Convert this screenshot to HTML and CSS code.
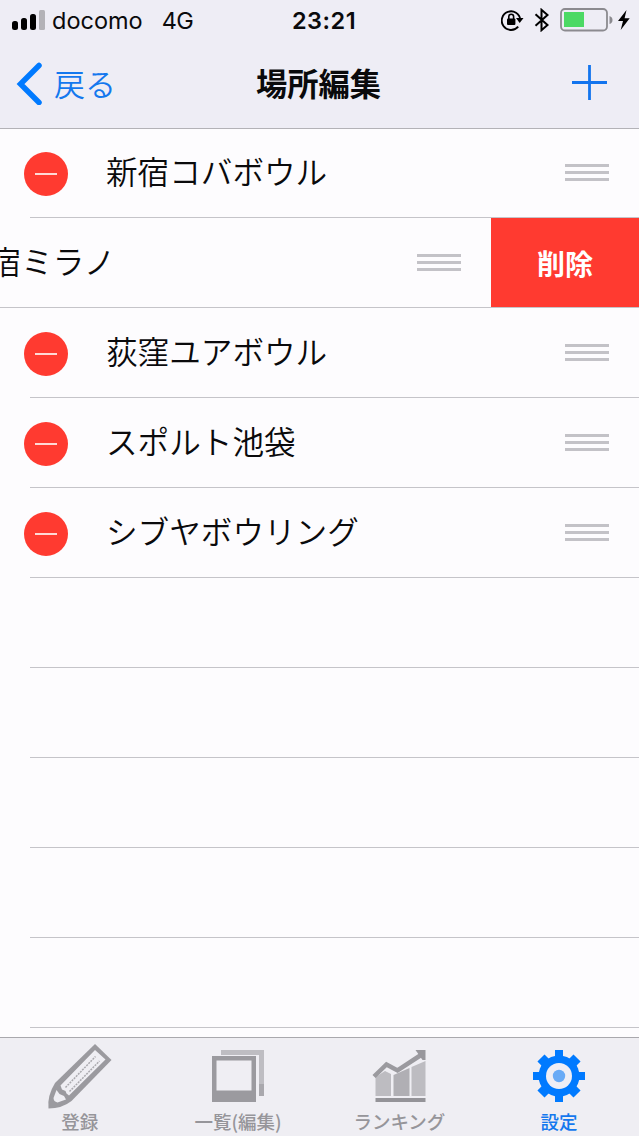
FILE: index.html
```html
<!DOCTYPE html>
<html lang="ja">
<head>
  <meta charset="UTF-8">
  <title>場所編集</title>
  <link rel="stylesheet" href="styles.css">
</head>
<body>
  <header class="header">
    <div class="status">
      <div class="status-left">
        <svg class="signal" width="34" height="21" viewBox="0 0 34 21">
          <rect x="0" y="11" width="6" height="9" rx="2.5"/>
          <rect x="9" y="8" width="6" height="12" rx="2.5"/>
          <rect x="18" y="4" width="6" height="16" rx="2.5"/>
          <rect x="27" y="0" width="6" height="20" rx="1.5" fill="#b3b2b7"/>
        </svg>
        <span class="carrier">docomo</span>
        <span class="network">4G</span>
      </div>
      <div class="clock">23:21</div>
      <div class="status-right">
        <svg width="23" height="22" viewBox="0 0 23 22">
          <path d="M17.2 17.6A9.3 9.3 0 1 1 19.3 10.8" fill="none" stroke="#000" stroke-width="1.9"/>
          <path d="M15 9h7.500l-3.800 5z"/>
          <rect x="6" y="9.500" width="8.400" height="6.500" rx="1"/>
          <path d="M7.800 10V7.600a2.400 2.400 0 0 1 4.800 0V10" fill="none" stroke="#000" stroke-width="1.600"/>
        </svg>
        <svg class="bluetooth" width="16" height="24" viewBox="0 0 16 24">
          <path d="M1.500 6.200L13.500 17 7.500 22.200V1.800L13.500 7 1.500 17.800" fill="none" stroke="#000" stroke-width="2"/>
        </svg>
        <svg class="battery" width="53" height="24" viewBox="0 0 53 24">
          <rect x="1" y="1" width="46" height="21.500" rx="4" fill="none" stroke="#8b8a8f" stroke-width="1.800"/>
          <rect x="4" y="4" width="20" height="15" fill="#4cd964"/>
          <path d="M49.500 8v8q3-1 3-4t-3-4z" fill="#8b8a8f"/>
        </svg>
        <svg class="bolt" width="12" height="20" viewBox="0 0 12 20">
          <path d="M8.500 0L0 11h5L2.700 20 11.700 8.200H6.600z"/>
        </svg>
      </div>
    </div>
    <nav class="navbar">
      <a class="back">
        <svg width="26" height="44" viewBox="0 0 26 44">
          <path d="M23 4.500L4.500 23 23 41.500" fill="none" stroke="#007aff" stroke-width="5.500" stroke-linecap="round"/>
        </svg>
        <span>戻る</span>
      </a>
      <h1 class="title">場所編集</h1>
      <a class="add">
        <svg width="36" height="36" viewBox="0 0 36 36">
          <path d="M17.500 0v35M0 17.500h35" stroke="#1274ee" stroke-width="2.800"/>
        </svg>
      </a>
    </nav>
  </header>

  <ul class="places">
    <li class="place">
      <span class="minus"></span>
      <div class="cell"><span class="name">新宿コバボウル</span><span class="grip"></span></div>
    </li>
    <li class="place swiped">
      <div class="cell"><span class="name">新宿ミラノ</span><span class="grip"></span></div>
      <button class="delete">削除</button>
    </li>
    <li class="place">
      <span class="minus"></span>
      <div class="cell"><span class="name">荻窪ユアボウル</span><span class="grip"></span></div>
    </li>
    <li class="place">
      <span class="minus"></span>
      <div class="cell"><span class="name">スポルト池袋</span><span class="grip"></span></div>
    </li>
    <li class="place">
      <span class="minus"></span>
      <div class="cell"><span class="name">シブヤボウリング</span><span class="grip"></span></div>
    </li>
    <li class="place"></li>
    <li class="place"></li>
    <li class="place"></li>
    <li class="place"></li>
    <li class="place"></li>
  </ul>

  <nav class="tabs">
    <a class="tab">
      <svg width="64" height="64" viewBox="0 0 64 64">
        <path d="M47 -1L63.500 15 23.500 56Q14 63.500 .5 63.500 -1 51 7 38z" fill="#9b9a9f"/>
        <path d="M47 5L57.500 14.500 21 50.500 18.500 48.500 17.500 46 14 44.500 12.500 40.500z" fill="#efeef3"/>
        <path d="M8.500 45L11.500 49 16 51 18 54.500 9.500 57.500Q5.500 56.500 5.500 53z" fill="#efeef3"/>
        <path d="M17.500 42.500L47.500 11.500M21.500 46.500L51.500 16" stroke="#aaa9ae" stroke-width="1.500" stroke-dasharray="2 1" fill="none"/>
      </svg>
      <span>登録</span>
    </a>
    <a class="tab list">
      <svg width="64" height="64" viewBox="0 0 64 64">
        <path d="M15 5h43v46h-5V10H15z" fill="#bebdc2"/>
        <path d="M53 39h5v12h-5z" fill="#a9a8ad"/>
        <path d="M6 11h44v46H6zM10.500 15.500v30h35v-30z" fill="#9b9a9f" fill-rule="evenodd"/>
      </svg>
      <span>一覧(編集)</span>
    </a>
    <a class="tab">
      <svg width="64" height="64" viewBox="0 0 64 64">
        <path d="M8.500 32L18 26l6 3V51H8.500zM44.500 22L58.500 16v35h-14z" fill="#bdbcc1"/>
        <path d="M26.500 30L42.500 23v28h-16z" fill="#b0afb4"/>
        <path d="M7 31.500L19.500 19.500 30.500 25.500 54 10" stroke="#9b9a9f" stroke-width="4.500" fill="none"/>
        <path d="M48.500 5H58.500v10h-3z" fill="#98979c"/>
        <path d="M8.500 53h50v4h-50z" fill="#949398"/>
      </svg>
      <span>ランキング</span>
    </a>
    <a class="tab active">
      <svg width="64" height="64" viewBox="0 0 64 64">
        <g fill="#007aff">
          <circle cx="32" cy="31" r="20.500"/>
          <path d="M28 5h8v52h-8zM6 27h52v8H6z"/>
          <path d="M27 5.500h10v51H27zM6.500 26h51v10h-51z" transform="rotate(45 32 31)"/>
        </g>
        <circle cx="32" cy="31" r="13" fill="#efeef5"/>
        <circle cx="32" cy="31" r="6.200" fill="#69aaf6"/>
      </svg>
      <span>設定</span>
    </a>
  </nav>
</body>
</html>
```
FILE: styles.css
```css
* {
  box-sizing: border-box;
}
body {
  margin: 0;
  height: 1136px;
  display: flex;
  flex-direction: column;
  overflow: hidden;
  background: #fdfcfe;
  color: #0a0a0c;
  font-family: "Noto Sans CJK JP", sans-serif;
}
.header {
  height: 129px;
  background: #eeedf5;
  border-bottom: 1px solid #b3b2b7;
}
.status {
  display: grid;
  grid-template-columns: 1fr auto 1fr;
  align-items: center;
  height: 40px;
  padding: 0 9px 0 12px;
  font-family: Inter, sans-serif;
  font-size: 23.5px;
}
.status-left,
.status-right {
  display: flex;
  align-items: center;
}
.status-right {
  justify-content: flex-end;
}
.carrier {
  margin-left: 6px;
}
.network {
  margin-left: 19px;
  letter-spacing: -0.5px;
}
.clock {
  padding-left: 6px;
  font-weight: 600;
  letter-spacing: 0.5px;
}
.bluetooth {
  margin-left: 10px;
}
.battery {
  margin-left: 10px;
}
.bolt {
  margin-left: 5px;
}
.navbar {
  display: grid;
  grid-template-columns: 1fr auto 1fr;
  align-items: center;
  height: 86px;
  padding: 0 32px 0 16px;
}
.back {
  display: flex;
  align-items: center;
  gap: 12px;
  color: #1478ee;
  font-size: 31px;
  font-weight: 350;
  line-height: 44px;
}
.title {
  margin: 0;
  padding-left: 14px;
  font-size: 31.3px;
  font-weight: 700;
  line-height: 44px;
}
.add {
  justify-self: end;
  margin-right: -1px;
}
.add svg,
.back svg {
  display: block;
}
.places {
  flex: 1;
  margin: 0;
  padding: 0;
  list-style: none;
}
.place {
  display: flex;
  align-items: center;
  height: 90px;
  margin-left: 30px;
  border-bottom: 1px solid #c5c4c9;
}
.place:first-child {
  height: 89px;
}
.minus {
  flex: none;
  display: flex;
  align-items: center;
  justify-content: center;
  width: 44px;
  height: 44px;
  margin: 3px 0 0 -6px;
  border-radius: 50%;
  background: #ff3a30;
}
.minus::before {
  content: "";
  width: 22px;
  height: 2px;
  background: #ffd9d6;
}
.place:first-child .minus {
  margin-top: 1px;
}
.cell {
  flex: 1;
  display: flex;
  align-items: center;
  justify-content: space-between;
  padding: 0 30px 0 38px;
}
.place:first-child .cell {
  margin-top: -1px;
}
.name {
  padding-bottom: 6px;
  font-size: 31.6px;
  font-weight: 350;
  line-height: 44px;
  white-space: nowrap;
}
.grip {
  width: 44px;
  height: 17px;
  border-top: 3px solid #c3c2c7;
  border-bottom: 3px solid #c3c2c7;
  background: linear-gradient(#c3c2c7, #c3c2c7) center / 100% 3px no-repeat;
}
.swiped {
  margin-left: 0;
}
.swiped .cell {
  margin-left: -42px;
  padding: 0 30px 0 0;
}
.delete {
  width: 148px;
  height: 89px;
  padding: 0;
  border: 0;
  background: #ff3a30;
  color: #fff;
  font: 700 28px "Noto Sans CJK JP", sans-serif;
}
.tabs {
  flex: none;
  display: grid;
  grid-template-columns: repeat(4, 1fr);
  height: 99px;
  border-top: 1px solid #a9a8ad;
  background: #efeef3;
}
.tab {
  display: flex;
  flex-direction: column;
  align-items: center;
  padding-top: 7px;
  color: #96959a;
  font-size: 18.5px;
  font-weight: 500;
  line-height: 24px;
}
.tab svg {
  overflow: visible;
}
.list {
  padding-right: 3px;
}
.tab.active {
  color: #1478ee;
}
```
